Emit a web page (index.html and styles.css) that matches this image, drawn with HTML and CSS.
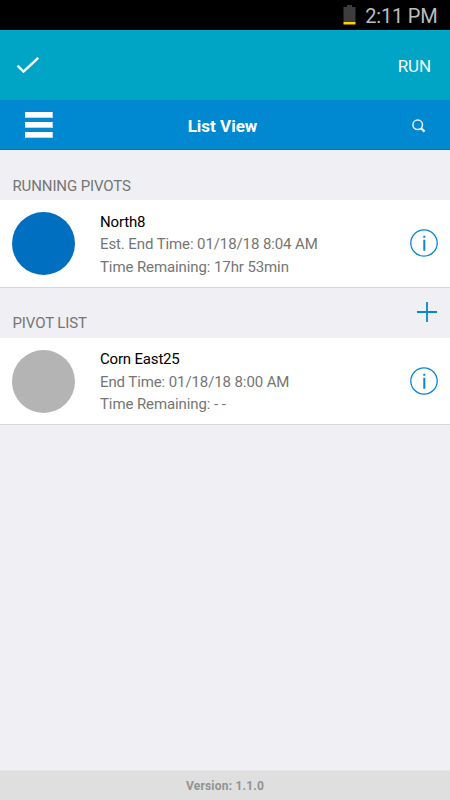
FILE: index.html
```html
<!DOCTYPE html>
<html lang="en">
<head>
<meta charset="utf-8">
<title>List View</title>
<link rel="stylesheet" href="styles.css">
</head>
<body>
<div class="status">
  <svg class="battery" width="13" height="20" viewBox="0 0 13 20"><path fill="#3d3d3d" d="M4 0h5v2h3.500v15H.5V2H4z"/><path fill="#ffd400" d="M.5 17h12v2.500H.5z"/></svg>
  <span class="clock">2:11 PM</span>
</div>
<div class="action">
  <svg class="check" width="24" height="18" viewBox="0 0 24 18"><path d="M1.500 8.700 7.500 14.600 22.200 .9" fill="none" stroke="#fff" stroke-width="2.400"/></svg>
  <span class="run">RUN</span>
</div>
<header class="navbar">
  <div class="menu"><i></i><i></i><i></i></div>
  <h1 class="title">List View</h1>
  <svg class="search" width="14" height="14" viewBox="0 0 14 14" fill="none" stroke="#e9f4fc"><circle cx="5.700" cy="5.800" r="4.800" stroke-width="1.500"/><path d="M9.200 9.400l3.400 3.200" stroke-width="2.200"/></svg>
</header>
<main class="content">
  <div class="section"><h2 class="heading">RUNNING PIVOTS</h2></div>
  <div class="item">
    <span class="dot running"></span>
    <div class="lines">
      <p class="name">North8</p>
      <p class="detail">Est. End Time: 01/18/18 8:04 AM</p>
      <p class="detail">Time Remaining: 17hr 53min</p>
    </div>
    <svg class="info" width="28" height="28" viewBox="0 0 28 28" fill="none" stroke="#0787d1"><circle cx="14" cy="14" r="13.200" stroke-width="1.300"/><path d="M14.300 6.700v2M14.300 10.800v11" stroke-width="2"/></svg>
  </div>
  <div class="section pivots">
    <h2 class="heading">PIVOT LIST</h2>
    <svg class="plus" width="20" height="20" viewBox="0 0 20 20"><path d="M0 10h20M10 0v20" stroke="#0787d1" stroke-width="1.800"/></svg>
  </div>
  <div class="item second">
    <span class="dot idle"></span>
    <div class="lines">
      <p class="name">Corn East25</p>
      <p class="detail">End Time: 01/18/18 8:00 AM</p>
      <p class="detail">Time Remaining: - -</p>
    </div>
    <svg class="info" width="28" height="28" viewBox="0 0 28 28" fill="none" stroke="#0787d1"><circle cx="14" cy="14" r="13.200" stroke-width="1.300"/><path d="M14.300 6.700v2M14.300 10.800v11" stroke-width="2"/></svg>
  </div>
</main>
<footer class="footer">Version: 1.1.0</footer>
</body>
</html>
```
FILE: styles.css
```css
* { box-sizing: border-box; margin: 0; padding: 0; }
body {
  width: 450px;
  height: 800px;
  display: flex;
  flex-direction: column;
  overflow: hidden;
  background: #efeff4;
  font-family: Roboto, "Liberation Sans", sans-serif;
  font-size: 15px;
}
svg { display: block; flex: none; }
.status {
  height: 30px;
  display: flex;
  justify-content: flex-end;
  align-items: center;
  gap: 9px;
  padding-right: 12.500px;
  background: #000;
}
.clock {
  color: #bdbdbd;
  font-size: 20px;
  letter-spacing: -0.2px;
  line-height: 24px;
  padding-top: 1px;
}
.action {
  height: 70px;
  display: flex;
  align-items: center;
  justify-content: space-between;
  padding: 1px 19px 0 16px;
  background: #00a5c6;
  border-top: 1px solid #00abcd;
}
.run { color: #f2fafc; font-size: 17px; letter-spacing: -0.1px; }
.navbar {
  height: 50px;
  display: grid;
  grid-template-columns: 28px 1fr 14px;
  align-items: center;
  padding: 0 25px;
  background: #0088d1;
  border-bottom: 1px solid #0079be;
}
.menu {
  display: flex;
  flex-direction: column;
  gap: 4px;
}
.menu i { height: 6px; background: #fff; border: solid #b9d4f2; border-width: 0 1px 1px 0; }
.title {
  color: #fff;
  font-size: 17px;
  font-weight: 700;
  padding: 2px 19px 0 0;
  text-align: center;
}
.search { margin: 2px 0 0 1px; }
.content { flex: 1; }
.section {
  height: 50px;
  display: flex;
  align-items: flex-start;
  justify-content: space-between;
  padding: 0 13px 0 12.5px;
}
.pivots { height: 49.500px; }
.heading {
  color: #757575;
  font-size: 15px;
  font-weight: 400;
  letter-spacing: -0.12px;
  line-height: 18px;
  margin-top: 27px;
}
.pivots .heading { margin-top: 26px; }
.plus { margin-top: 14.300px; }
.item {
  height: 88px;
  display: flex;
  align-items: flex-start;
  padding: 12px 12.500px 0 12px;
  background: #fff;
  border-bottom: 1px solid #d7d7da;
}
.item.second { height: 87.500px; }
.dot { width: 63px; height: 63px; border-radius: 50%; flex: none; }
.running { background: #006fc0; }
.idle { background: #b4b4b4; }
.lines {
  flex: 1;
  margin: -1.500px 0 0 25px;
  color: #757575;
  letter-spacing: -0.1px;
  line-height: 22.500px;
  white-space: nowrap;
}
.name { color: #000; letter-spacing: -0.18px; }
.info { margin-top: 17.300px; }
.footer {
  height: 30px;
  background: #dfdfdf;
  border-top: 1px solid #e7e7ea;
  color: #909395;
  font-size: 12px;
  font-weight: 700;
  letter-spacing: 0.2px;
  line-height: 30px;
  text-align: center;
}
```
